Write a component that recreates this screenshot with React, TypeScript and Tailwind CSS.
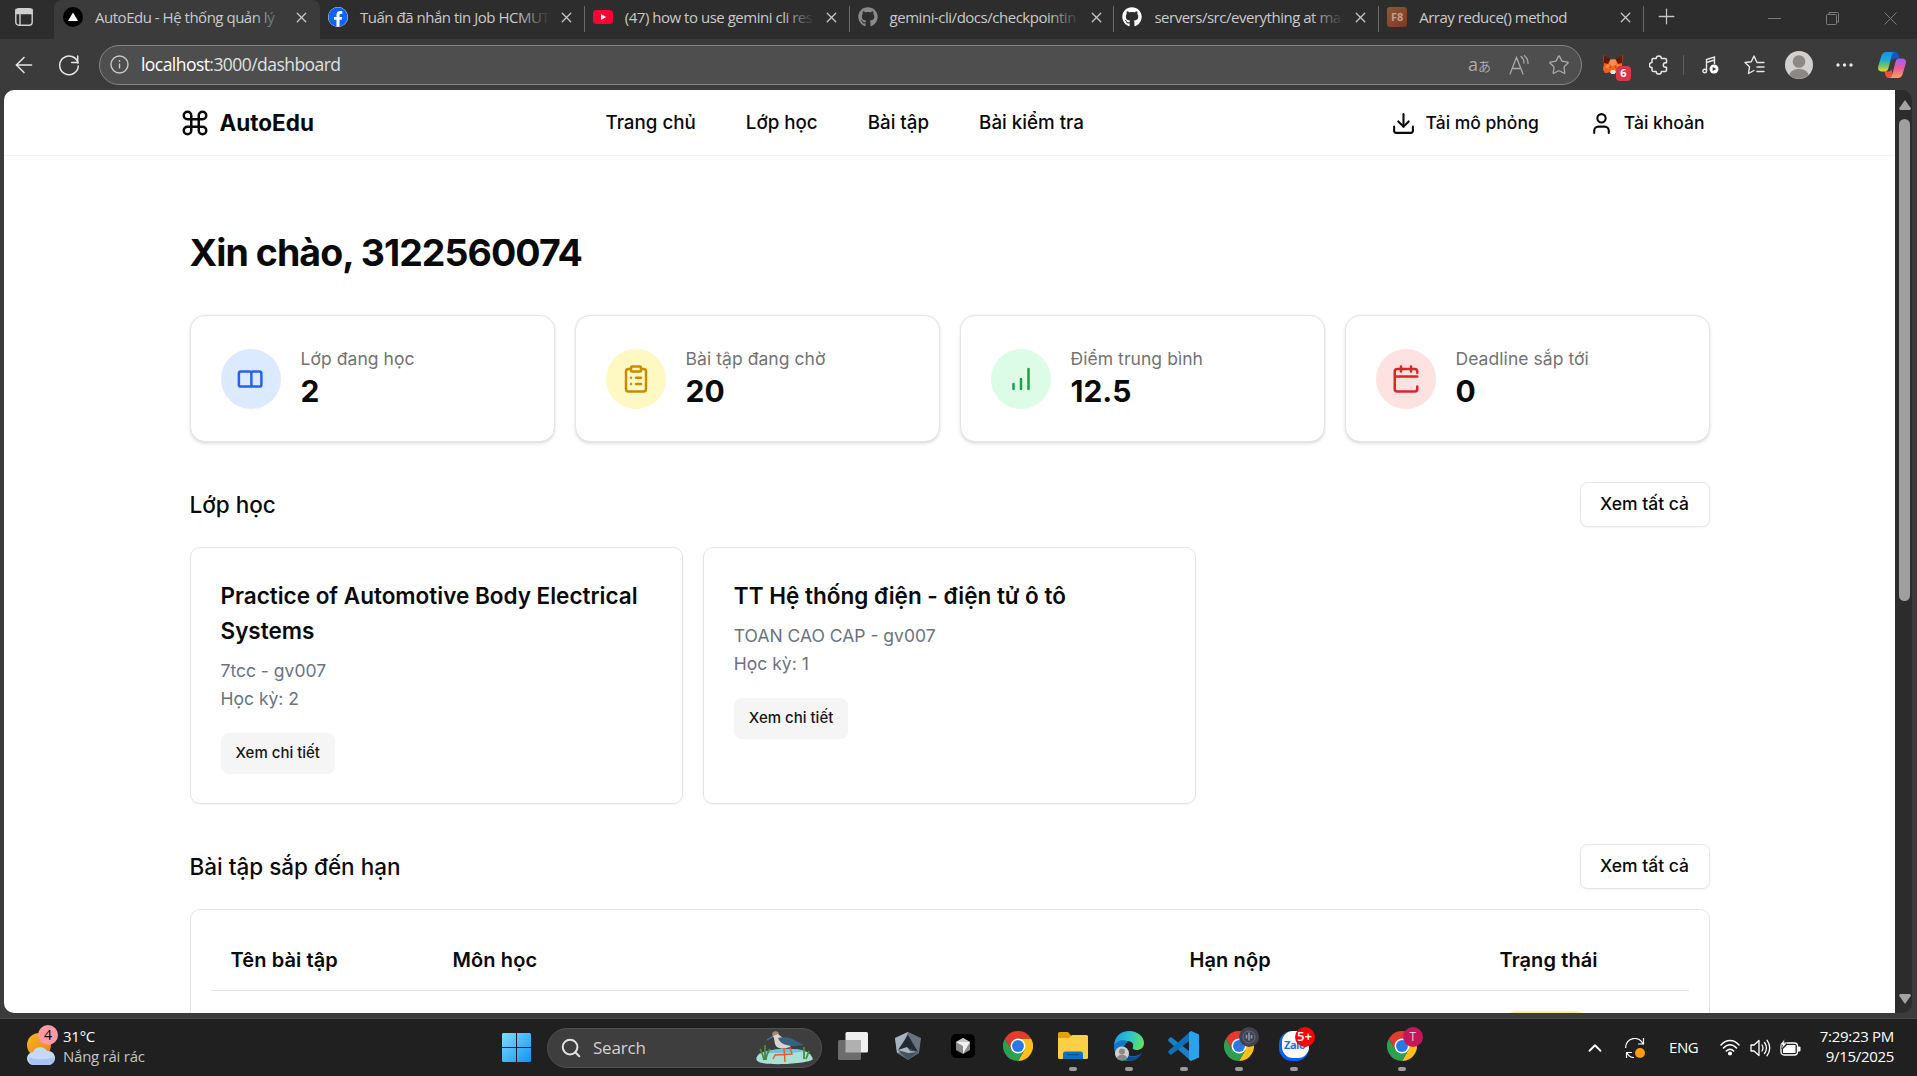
import type { ReactNode } from "react";
import { Command, Download, User, ClipboardList, X, Plus, Star, Search, ArrowLeft, ChevronUp } from "lucide-react";
import { FaFacebook, FaGithub } from "react-icons/fa";

/* ---------- browser chrome ---------- */

function Tab({ icon, title, active, last, gradient }: { icon: ReactNode; title: string; active?: boolean; last?: boolean; gradient: string }) {
  return (
    <div className={`relative flex h-[39px] shrink-0 items-center pb-[5px] ${active ? "w-[266px] rounded-t-lg bg-[#3b3b3b] pl-[9px]" : "w-[264.8px] pl-[8px]"}`}>
      <span className="flex h-5 w-5 shrink-0 items-center justify-center">{icon}</span>
      <span className="relative ml-3 w-[187px] whitespace-nowrap text-[15px] leading-5 tracking-[-0.48px] text-[#c9c9c9]">
        {title}
        {!last && <span className={`absolute -right-[3px] top-0 h-full w-8 bg-linear-to-r from-transparent ${gradient}`} />}
      </span>
      <X className="ml-[11px] h-[17px] w-[17px] shrink-0 text-[#c8c8c8]" strokeWidth={1.8} />
      {!active && <span className="absolute right-0 top-[6px] h-[26px] w-px bg-[#6b6b6b]" />}
    </div>
  );
}

function TabStrip() {
  const g = "to-[#2d2d2d]";
  return (
    <div className="flex h-[39px] bg-[#2d2d2d]">
      <div className="flex w-[54px] shrink-0 items-center rounded-br-lg pb-[5px] pl-[15px]">
        <svg width="18" height="18" viewBox="0 0 18 18" fill="none" stroke="#cfcfcf" strokeWidth="1.4">
          <rect x="0.8" y="0.8" width="16.4" height="16.4" rx="3" />
          <path d="M1 1.5h16v4H1z" fill="#cfcfcf" />
          <path d="M5 5v12" />
        </svg>
      </div>
      <Tab active gradient="to-[#3b3b3b]" title="AutoEdu - Hệ thống quản lý" icon={
        <svg width="20" height="20" viewBox="0 0 20 20"><circle cx="10" cy="10" r="10" fill="#000" /><path d="M10 5.5l5 8.500H5z" fill="#fff" /></svg>} />
      <Tab gradient={g} title="Tuấn đã nhắn tin Job HCMUT" icon={<FaFacebook className="h-5 w-5 rounded-full bg-white text-[#0866ff]" />} />
      <Tab gradient={g} title="(47) how to use gemini cli res" icon={
        <svg width="20" height="14" viewBox="0 0 20 14"><rect width="20" height="14" rx="3.500" fill="#ff0033" /><path d="M8 4l5 3-5 3z" fill="#fff" /></svg>} />
      <Tab gradient={g} title="gemini-cli/docs/checkpointin" icon={<FaGithub className="h-5 w-5 text-[#8a8a8a]" />} />
      <Tab gradient={g} title="servers/src/everything at mai" icon={<FaGithub className="h-5 w-5 text-white" />} />
      <Tab last gradient={g} title="Array reduce() method" icon={
        <span className="flex h-5 w-5 items-center justify-center rounded-[3px] bg-linear-to-br from-[#8d5a38] to-[#7f3622] text-[11px] font-bold text-[#c3a08c]">F8</span>} />
      <div className="flex w-[46px] items-center pb-[6px] pl-[10px]"><Plus className="h-[25px] w-[25px] text-[#c4c4c4]" strokeWidth={1.2} /></div>
      <div className="ml-auto flex items-center gap-[45px] pb-[3px] pr-5 text-[#7c7c7c]">
        <svg width="13" height="13" stroke="currentColor"><path d="M0 6.500h13" /></svg>
        <svg width="13" height="13" fill="none" stroke="currentColor"><rect x="0.5" y="2.5" width="10" height="10" rx="1" /><path d="M3 2.500V.5h8.500a1 1 0 0 1 1 1V10h-2" /></svg>
        <svg width="13" height="13" stroke="currentColor"><path d="M.5.5l12 12M12.500.5l-12 12" /></svg>
      </div>
    </div>
  );
}

function Fox() {
  return (
    <svg width="20" height="19" viewBox="0 0 20 19">
      <path d="M0 0l7.500 4.500h5L20 0l-1 9 1 5-2 4-5-1-1.500 2h-3L7 17l-5 1-2-4 1-5z" fill="#f5671f" />
      <path d="M.5 0l7 4L5 9 1 8zM19.500 0l-7 4L15 9l4-1z" fill="#661800" />
      <path d="M5 9l3 3-6 1zM15 9l-3 3 6 1zM7.500 4.500h5L14 9l-4 2-4-2z" fill="#ff8c4a" />
      <path d="M0 14l6-.5 1 3.500-5 1z" fill="#ff5c16" />
      <path d="M7 17l1.500-2h3L13 17l-1.500 2h-3z" fill="#e8e5e3" />
      <path d="M6 11.500l2 .3-.5 1zM14 11.500l-2 .3.5 1z" fill="#2b1c16" />
    </svg>
  );
}

function Copilot() {
  return (
    <svg width="28" height="26" viewBox="0 0 28 26">
      <defs>
        <linearGradient id="cpA" x1="0" y1="0" x2="0" y2="1"><stop offset="0" stopColor="#168ff0" /><stop offset=".4" stopColor="#22a6d8" /><stop offset=".7" stopColor="#6cc665" /><stop offset="1" stopColor="#f4d329" /></linearGradient>
        <linearGradient id="cpB" x1="0" y1="0" x2="0" y2="1"><stop offset="0" stopColor="#a45cf0" /><stop offset=".5" stopColor="#ec5a9c" /><stop offset="1" stopColor="#ffa05a" /></linearGradient>
      </defs>
      <path d="M13 0h4c2 0 3 1 3.600 3l.9 3.500H17c-2 0-3 1-3.500 2.500z" fill="#1458c8" />
      <path d="M6.500 19.500H11c1 0 2-1 2.500-2.500L15 26h-4c-2 0-3-1-3.600-3z" fill="#f2503c" />
      <path d="M8 0h9c-1.500 0-2.500 1-3 2.500L10.500 16c-.6 2.300-1.500 3.500-3.500 3.500H4c-3.200 0-4.500-2-3.800-5L3.500 3.500C4.300 1.200 5.700 0 8 0z" fill="url(#cpA)" />
      <path d="M20 26h-9c1.500 0 2.500-1 3-2.500L17.500 10c.6-2.300 1.500-3.500 3.500-3.500h3c3.200 0 4.500 2 3.800 5l-3.300 11c-.8 2.300-2.200 3.500-4.500 3.500z" fill="url(#cpB)" />
    </svg>
  );
}

function AddressBar() {
  return (
    <div className="flex h-[51px] items-center bg-[#3b3b3b] text-[#e6e6e6]">
      <div className="flex w-[99px] items-center gap-[21px] pl-[11px]">
        <ArrowLeft className="h-[26px] w-[26px]" strokeWidth={1.4} />
        <svg width="22" height="22" viewBox="0 0 22 22" fill="none" stroke="currentColor" strokeWidth="1.500" strokeLinecap="round"><path d="M20 9A9.300 9.300 0 1 0 20.300 12" /><path d="M19.700 2v6.500h-6" /></svg>
      </div>
      <div className="flex h-10 w-[1483px] items-center rounded-full border border-[#858585] bg-[#4e4e4e] pl-[10px] pr-[11px]">
        <svg width="19" height="19" viewBox="0 0 19 19" fill="none" stroke="#c8c8c8" strokeWidth="1.400"><circle cx="9.500" cy="9.500" r="8.500" /><path d="M9.500 8.500v5M9.500 5v1.800" /></svg>
        <span className="ml-[12px] text-[17.500px] tracking-[-0.55px] text-[#e0e0e0]"><span className="text-white">localhost</span>:3000/dashboard</span>
        <div className="ml-auto flex items-center gap-[19px] text-[#ababab]">
          <span className="flex w-[22px] items-baseline text-[18px] leading-5">a<span className="font-['Noto_Sans_CJK_JP',sans-serif] text-[13px]">あ</span></span>
          <svg width="20" height="20" viewBox="0 0 20 20" fill="none" stroke="currentColor" strokeWidth="1.300" strokeLinecap="round"><path d="M1 19L7.500 2.500 14 19M3.300 13.500h8.400M12 1.500c2 1.500 3 4 3 6.500M15.500.7c2.500 2 3.500 4.800 3.500 7.800" /></svg>
          <Star className="h-[22px] w-[22px]" strokeWidth={1.4} />
        </div>
      </div>
      <div className="flex flex-1 items-center pl-[21px]">
        <span className="relative flex w-5">
          <Fox />
          <span className="absolute left-[13px] top-[11px] flex h-[15px] w-[15px] items-center justify-center rounded-[4px] bg-[#dc3545] text-[11px] font-bold text-white">6</span>
        </span>
        <svg className="ml-[26px]" width="19" height="20" viewBox="0 0 19 20" fill="none" stroke="currentColor" strokeWidth="1.500" strokeLinejoin="round">
          <path d="M4 3.500h3.200a2.600 2.600 0 0 1 5.200 0H16a1.500 1.500 0 0 1 1.500 1.500v2.700h-.9a2.300 2.300 0 0 0 0 4.600h.9V15a1.500 1.500 0 0 1-1.500 1.500h-3.600a2.600 2.600 0 0 1-5.200 0H4.500A1.500 1.500 0 0 1 3 15v-2.400a2.600 2.600 0 0 1 0-5.200V5a1.500 1.500 0 0 1 1-1.500z" />
        </svg>
        <span className="ml-[15px] h-5 w-px bg-[#5e5e5e]" />
        <svg className="ml-[18px]" width="17" height="18" viewBox="0 0 17 18" fill="none" stroke="currentColor" strokeWidth="1.400"><path d="M4.500 15V3.500L12.500 1v7M4.500 6.500l8-2.500" /><circle cx="2.700" cy="15" r="1.800" /><circle cx="12" cy="13" r="4.500" fill="#fff" stroke="none" /><path d="M10.700 11l3.500 2-3.500 2z" fill="#333" stroke="none" /></svg>
        <svg className="ml-[25px]" width="21" height="20" viewBox="0 0 21 20" fill="none" stroke="currentColor" strokeWidth="1.400" strokeLinecap="round" strokeLinejoin="round"><path d="M12.500 6.500L10 1 7.300 6.700 1 7.500l4.500 4.300L4.500 18.500l5.500-3M13 7.500h7M13 12h7M13 16.500h7" /></svg>
        <svg className="ml-[20px]" width="28" height="28" viewBox="0 0 28 28"><circle cx="14" cy="14" r="14" fill="#d2d0ce" /><circle cx="14" cy="10.500" r="6.300" fill="#8b8886" /><path d="M4.500 24c1-8 18-8 19 0A14 14 0 0 1 4.500 24z" fill="#8b8886" /></svg>
        <svg className="ml-[23px]" width="17" height="4" fill="#e6e6e6"><circle cx="2" cy="2" r="1.700" /><circle cx="8.500" cy="2" r="1.700" /><circle cx="15" cy="2" r="1.700" /></svg>
        <span className="ml-[25px]"><Copilot /></span>
      </div>
    </div>
  );
}

/* ---------- dashboard ---------- */

function SiteHeader() {
  return (
    <header className="border-b border-[#f3f3f3]">
      <div className="mx-auto flex h-[65px] w-[1600px] items-center px-[30px] text-[#0a0a0a]">
        <div className="flex w-[426px] items-center gap-[10px]">
          <Command className="h-[30px] w-[30px]" strokeWidth={2} />
          <span className="text-[22.500px] font-bold">AutoEdu</span>
        </div>
        <nav className="flex gap-[50px] pt-[2px] text-[18.750px] font-medium">
          <span>Trang chủ</span><span>Lớp học</span><span>Bài tập</span><span>Bài kiểm tra</span>
        </nav>
        <div className="ml-auto flex items-center pr-[15px] pt-px text-[17.500px] font-medium">
          <Download className="h-[25px] w-[25px]" strokeWidth={2} />
          <span className="ml-[10px] pt-px">Tải mô phỏng</span>
          <User className="ml-[50px] h-[25px] w-[25px]" strokeWidth={2} />
          <span className="ml-[10px] pt-px">Tài khoản</span>
        </div>
      </div>
    </header>
  );
}

function StatCard({ icon, tint, label, value }: { icon: ReactNode; tint: string; label: string; value: string }) {
  return (
    <div className="flex items-center gap-5 rounded-[15px] border border-[#e5e5e5] bg-white p-[30px] shadow-[0_1.25px_3.75px_rgba(0,0,0,0.1),0_1.25px_2.5px_-1.25px_rgba(0,0,0,0.1)]">
      <span className={`mt-px flex h-[60px] w-[60px] items-center justify-center rounded-full ${tint}`}>{icon}</span>
      <div>
        <p className="text-[17.500px] leading-[25px] tracking-[0.06px] text-[#737373]">{label}</p>
        <p className="text-[30px] font-bold leading-10">{value}</p>
      </div>
    </div>
  );
}

const stroke = { width: 30, height: 30, viewBox: "0 0 24 24", fill: "none", stroke: "currentColor", strokeWidth: 2, strokeLinecap: "round", strokeLinejoin: "round" } as const;

function SectionTitle({ title }: { title: string }) {
  return (
    <div className="mt-10 flex h-[45px] items-center justify-between">
      <h2 className="text-[22.500px] font-medium leading-[35px]">{title}</h2>
      <button className="h-[45px] w-[130px] whitespace-nowrap rounded-[7.500px] border border-[#e5e5e5] bg-white pt-px text-[17.500px] font-medium shadow-[0_1px_2px_rgba(0,0,0,0.05)]">Xem tất cả</button>
    </div>
  );
}

function ClassCard({ name, code, term }: { name: string; code: string; term: string }) {
  return (
    <div className="rounded-[10px] border border-[#e5e5e5] bg-white px-[30px] pb-[29px] pt-[30px] shadow-[0_1px_2px_rgba(0,0,0,0.05)]">
      <h3 className="text-[22.500px] font-semibold leading-[35px]">{name}</h3>
      <p className="mt-[9px] text-[17.500px] leading-7 text-[#6b7280]">{code}</p>
      <p className="text-[17.500px] leading-7 text-[#6b7280]">{term}</p>
      <button className="mt-5 h-[41px] rounded-[7.500px] bg-[#f5f5f5] px-[15px] text-[15px] font-medium text-[#171717]">Xem chi tiết</button>
    </div>
  );
}

function Dashboard() {
  return (
    <main className="mx-auto w-[1520px] pt-[72px] text-[#0a0a0a]">
      <h1 className="mb-[36.500px] text-[37.500px] font-bold leading-[50px] tracking-[-0.025em]">Xin chào, 3122560074</h1>
      <div className="grid grid-cols-4 gap-5">
        <StatCard label="Lớp đang học" value="2" tint="bg-[#dbeafe] text-[#2563eb]" icon={
          <svg {...stroke}><path d="M12 7.500A1.500 1.500 0 0 0 10.500 6h-7A1.500 1.500 0 0 0 2 7.500v9A1.500 1.500 0 0 0 3.500 18h7a1.500 1.500 0 0 0 1.500-1.500zM12 7.500A1.500 1.500 0 0 1 13.500 6h5A1.500 1.500 0 0 1 20 7.500v9a1.500 1.500 0 0 1-1.500 1.500h-5a1.500 1.500 0 0 1-1.500-1.500" transform="translate(.3 0)" /></svg>} />
        <StatCard label="Bài tập đang chờ" value="20" tint="bg-[#fef9c3] text-[#ca8a04]" icon={<ClipboardList className="h-[30px] w-[30px]" />} />
        <StatCard label="Điểm trung bình" value="12.5" tint="bg-[#dcfce7] text-[#16a34a]" icon={
          <svg {...stroke}><path d="M6 20v-4M12 20v-8M18 20V4" /></svg>} />
        <StatCard label="Deadline sắp tới" value="0" tint="bg-[#fee2e2] text-[#dc2626]" icon={
          <svg {...stroke}><path d="M8 2v4M16 2v4M3 10h18M21 7V6a2 2 0 0 0-2-2H5a2 2 0 0 0-2 2v14a2 2 0 0 0 2 2h14a2 2 0 0 0 2-2v-2" /></svg>} />
      </div>
      <SectionTitle title="Lớp học" />
      <div className="mt-5 grid grid-cols-3 gap-5">
        <ClassCard name="Practice of Automotive Body Electrical Systems" code="7tcc - gv007" term="Học kỳ: 2" />
        <ClassCard name="TT Hệ thống điện - điện tử ô tô" code="TOAN CAO CAP - gv007" term="Học kỳ: 1" />
      </div>
      <SectionTitle title="Bài tập sắp đến hạn" />
      <div className="mt-5 h-[300px] rounded-[10px] border border-[#e5e5e5] p-5 pt-[21px]">
        <div className="grid h-[60px] grid-cols-[222px_737px_310px_1fr] items-center border-b border-[#e5e5e5] pl-5 text-[20px] font-semibold tracking-[0.1px]">
          <span>Tên bài tập</span><span>Môn học</span><span>Hạn nộp</span><span>Trạng thái</span>
        </div>
        <div className="grid grid-cols-[1269px_1fr] pl-5 pt-5"><span /><span className="h-[35px] w-[92px] rounded-full bg-[#fef08a]" /></div>
      </div>
    </main>
  );
}

/* ---------- taskbar ---------- */

function Chrome() {
  return (
    <svg width="30" height="30" viewBox="0 0 48 48">
      <path d="M24 12h20.800A24 24 0 0 1 24 48l10.400-18z" fill="#fbc116" />
      <path d="M3.200 12A24 24 0 0 0 24 48l10.400-18H13.600z" fill="#2f9e4f" />
      <path d="M3.200 12A24 24 0 0 1 44.800 12H24L13.600 30z" fill="#e33b2e" />
      <circle cx="24" cy="24" r="12" fill="#fff" /><circle cx="24" cy="24" r="9.500" fill="#2a78e8" />
    </svg>
  );
}

function TaskItem({ children, running, badge }: { children: ReactNode; running?: boolean; badge?: ReactNode }) {
  return (
    <div className="relative flex h-full w-[55.200px] shrink-0 items-center justify-center pb-1">
      {children}
      {badge}
      {running && <span className="absolute bottom-[5px] h-1 w-2 rounded-full bg-[#9b9b9b]" />}
    </div>
  );
}

function Bird() {
  return (
    <svg width="58" height="34" viewBox="0 0 58 34">
      <path d="M3 23c8-5 36-7 48-2 4 2 5 5 6 7-4 5-46 7-54 3-4-2-3-5 0-8z" fill="#a6e3d6" />
      <path d="M3 23c8-5 36-7 46-3-10 3-34 1-46 3z" fill="#6cc3dc" />
      <path d="M19 4l-8 5" stroke="#3f7fa0" strokeWidth="1.300" />
      <circle cx="19.500" cy="3.500" r="3.200" fill="#a78871" />
      <path d="M17 5c2 3 1 9 4 11 5 3 12 1 14-1L28 8l-6-5z" fill="#d9d4cd" />
      <path d="M22 7c6-2 14 0 18 3l8 4-10 1c-7 0-14-2-16-8z" fill="#39617f" />
      <path d="M28 17l1 14M34 16l2 7-17 1-2 4" stroke="#f0562f" strokeWidth="1.400" fill="none" />
      <path d="M8 29c-1-5-2-8-4-11M9 29V14M10 29c0-5 2-8 4-11M48 28V16M50 28l3-8" stroke="#4d8a3d" strokeWidth="1.800" fill="none" />
    </svg>
  );
}

function Taskbar() {
  const badge = "absolute left-[28px] top-[8px] flex h-5 w-5 items-center justify-center rounded-full text-[12px]";
  return (
    <footer className="flex h-[58px] items-center border-t border-[#484848] bg-[#202020] text-white">
      <div className="flex w-[502px] items-center pl-[26px]">
        <div className="relative h-[38px] w-[37px]">
          <svg className="mt-[1px]" width="29" height="36" viewBox="0 0 29 36"><defs><linearGradient id="sun" x1="0" y1="0" x2="1" y2="1"><stop offset="0" stopColor="#f5b62a" /><stop offset="1" stopColor="#f0820f" /></linearGradient></defs><circle cx="13" cy="15" r="12" fill="url(#sun)" /><path d="M8 35a6.500 6.500 0 0 1-1-13 8 8 0 0 1 14-1 7 7 0 0 1 2 14z" fill="#c5daf8" /><path d="M8 35a6.500 6.500 0 0 1-5-8c5 3 19 3 25 0a6 6 0 0 1-5 8z" fill="#a9c4f2" /></svg>
          <span className="absolute left-[12px] top-[-4px] flex h-5 w-5 items-center justify-center rounded-full bg-[#ff99a4] text-[14px] text-black">4</span>
        </div>
        <div className="-mt-[3px] text-[15px] leading-5 tracking-[-0.25px]"><p>31°C</p><p className="text-[#c4c4c4]">Nắng rải rác</p></div>
      </div>
      <svg width="29" height="29" viewBox="0 0 29 29">
        <defs><linearGradient id="win" x1="0" y1="0" x2="1" y2="1"><stop offset="0" stopColor="#7fdcfb" /><stop offset="1" stopColor="#0f94f5" /></linearGradient></defs>
        <path d="M1 0h13v14H0V1zM15 0h13l1 1v13H15zM0 15h14v14H1l-1-1zM15 15h14v13l-1 1H15z" fill="url(#win)" />
      </svg>
      <div className="ml-4 flex h-10 w-[275px] items-center rounded-full border border-[#505050] bg-[#3e3e3e] pl-[12px] pr-[7px]">
        <Search className="h-[22px] w-[22px] text-[#e2e2e2]" strokeWidth={2.200} />
        <span className="ml-[11px] text-[17px] tracking-[-0.2px] text-[#d2d2d2]">Search</span>
        <span className="ml-auto"><Bird /></span>
      </div>
      <div className="ml-[3px] flex h-full">
        <TaskItem><svg width="30" height="28" viewBox="0 0 30 28"><rect x="7.500" y="0" width="22.500" height="20.500" rx="1.500" fill="#f0f0f0" /><rect x="0" y="8" width="23" height="20" rx="1.500" fill="#6c6c6c" /><path d="M7.500 8H23v12.500H7.500z" fill="#b0b0b0" /></svg></TaskItem>
        <TaskItem><svg width="26" height="28" viewBox="0 0 26 28"><path d="M13 0l13 6-2 15-11 7-11-7L0 6z" fill="#68737f" /><path d="M13 0L0 6l2 15 3-1z" fill="#a7b4c0" /><path d="M13 3l10 17-11-4-9 2z" fill="#222a33" /><path d="M3 18l9-2 11 4-10 8z" fill="#465260" /><path d="M3 18l9-3 3 4 8 1-10 1z" fill="#aab8c4" /></svg></TaskItem>
        <TaskItem><svg width="24" height="24" viewBox="0 0 24 24"><rect width="24" height="24" rx="5" fill="#000" /><path d="M12 4l7 4v8l-7 4-7-4V8z" fill="#8a8a8a" /><path d="M5 8h14l-7 12v-8z" fill="#f1f1f1" /><path d="M12 4l7 4H5z" fill="#c7c7c7" /></svg></TaskItem>
        <TaskItem><Chrome /></TaskItem>
        <TaskItem running>
          <svg width="30" height="27" viewBox="0 0 30 27"><path d="M0 1.500A1.500 1.500 0 0 1 1.500 0H10l3 3.500V8H0z" fill="#e0a012" /><path d="M0 6h11l3-3h14.500A1.500 1.500 0 0 1 30 4.500v21a1.500 1.500 0 0 1-1.500 1.500h-27A1.500 1.500 0 0 1 0 25.500z" fill="#fdce46" /><path d="M5 27v-5a2.500 2.500 0 0 1 2.500-2.500h15A2.500 2.500 0 0 1 25 22v5z" fill="#1072bd" /><path d="M9 22.700h12" stroke="#074b86" /></svg>
        </TaskItem>
        <TaskItem running>
          <svg width="30" height="30" viewBox="0 0 30 30">
            <defs><linearGradient id="edge" x1="0" y1=".3" x2="1" y2=".5"><stop offset="0" stopColor="#1b9de2" /><stop offset=".5" stopColor="#2bc3d2" /><stop offset="1" stopColor="#65e15c" /></linearGradient></defs>
            <path d="M0 14C1 5 7 0 15 0c9 0 15 6 15 12 0 5-4 7-7 7s-5-1-4-3c1-4-2-6-6-6-6 0-11 3-13 4z" fill="url(#edge)" />
            <path d="M0 14c3-5 11-6 14-3-6 3-5 12 3 14 4 1 8-1 11-3-3 5-8 8-13 8C6 30-1 23 0 14z" fill="#1277c9" />
            <path d="M11 16c-1 5 2 10 8 10 3 0 7-2 9-4-3 5-8 8-13 8-6-1-8-9-4-14z" fill="#134b91" />
            <circle cx="8" cy="22.500" r="7" fill="#d2d0ce" /><circle cx="8" cy="20.500" r="3" fill="#8b8886" /><path d="M3 27.500c0-5 10-5 10 0a7 7 0 0 1-10 0z" fill="#8b8886" />
          </svg>
        </TaskItem>
        <TaskItem running>
          <svg width="31" height="30" viewBox="0 0 31 30"><path d="M1 7.500L3 6l20 15.500V30L.8 10.500c-1-1-.8-2 .2-3z" fill="#1581c8" /><path d="M1 22.500L3 24 23 8.500V0L.8 19.500c-1 1-.8 2 .2 3z" fill="#0f70b5" /><path d="M23 0l8 3.500v23L23 30l-2-1.500V1.500z" fill="#28a3ef" /></svg>
        </TaskItem>
        <TaskItem running badge={<span className={`${badge} bg-[#40424f]`}><svg width="14" height="14" viewBox="0 0 14 14"><circle cx="7" cy="7" r="6" fill="none" stroke="#686e7c" /><path d="M7 2.500v8M4.500 5v3.500M9.500 5v3.500" stroke="#8d97a8" strokeWidth="1.600" fill="none" /></svg></span>}><Chrome /></TaskItem>
        <TaskItem running badge={<span className={`${badge} bg-[#f70505] text-[13px] font-semibold`}>5+</span>}>
          <span className="relative flex h-[30px] w-[30px] items-center rounded-[13px] bg-[#0a62f3] pl-[5px]"><span className="absolute left-[3px] top-0 h-[27px] w-[27px] rounded-[11px] bg-white" /><span className="relative text-[11px] font-bold tracking-[-0.5px] text-[#1a6df0]">Zalo</span></span>
        </TaskItem>
        <span className="w-[53px]" />
        <TaskItem running badge={<span className={`${badge} bg-[#c2185b] text-[#f1c6d7]`}>T</span>}><Chrome /></TaskItem>
      </div>
      <div className="ml-auto flex items-center pr-[23px]">
        <ChevronUp className="h-[22px] w-[22px]" strokeWidth={2} />
        <svg className="ml-[19px]" width="20" height="20" viewBox="0 0 20 20" fill="none" stroke="#fff" strokeWidth="1.200"><path d="M.7 10a9 9 0 0 1 17.500-3.500M18.500 0v6H13M1.500 20v-5.500H7M2 15c1.500 3 4 4.500 7 4.500" /><circle cx="15" cy="15" r="5" fill="#ff9a0a" stroke="none" /></svg>
        <span className="ml-[24px] w-[29px] text-[15px] tracking-[-0.4px]">ENG</span>
        <svg className="ml-[22px]" width="20" height="17" viewBox="0 0 20 17" fill="none" stroke="#fff" strokeWidth="1.500" strokeLinecap="round"><path d="M1 6c5-6 13-6 18 0M3.500 9c4-4.500 9-4.500 13 0M6.300 12c2.500-2.500 5-2.500 7.400 0" /><circle cx="10" cy="14.500" r="1.300" fill="#fff" /></svg>
        <svg className="ml-[10px]" width="21" height="18" viewBox="0 0 21 18" fill="none" stroke="#fff" strokeWidth="1.300" strokeLinecap="round" strokeLinejoin="round"><path d="M1 6h3l5-4.500v15L4 12H1zM12 6c1.300 2 1.300 4 0 6M14.500 3.500c2.500 3.500 2.500 7.500 0 11M17 1.200c3.500 5 3.500 10.600 0 15.600" /></svg>
        <svg className="ml-[9px]" width="21" height="17" viewBox="0 0 21 17"><rect x="1" y="4" width="16.500" height="12" rx="3" fill="none" stroke="#fff" strokeWidth="1.300" /><path d="M3 14V10l4-4h8.500v8z" fill="#fff" /><path d="M18 7.500h1.500a1 1 0 0 1 1 1v3a1 1 0 0 1-1 1H18z" fill="#fff" /><path d="M4.500 0L0 6h2.500L1.500 10 7 4H4z" fill="#fff" stroke="#202020" strokeWidth=".5" /></svg>
        <div className="-mt-[3px] ml-[13px] w-[80px] whitespace-nowrap text-right text-[15px] leading-5 tracking-[-0.3px]"><p>7:29:23 PM</p><p>9/15/2025</p></div>
      </div>
    </footer>
  );
}

export default function App() {
  return (
    <div className="flex h-[1076px] w-[1917px] flex-col overflow-hidden bg-[#3b3b3b] font-['Open_Sans','Noto_Sans',sans-serif]">
      <TabStrip />
      <AddressBar />
      <div className="ml-1 mr-[5px] flex h-[923px] overflow-hidden rounded-[10px]">
        <div className="h-full w-[1891px] overflow-hidden bg-white font-[Inter,sans-serif]">
          <SiteHeader />
          <Dashboard />
        </div>
        <div className="flex h-full flex-1 flex-col items-center bg-[#2c2c2c] pb-[9px] pl-[2px] pt-[10px]">
          <svg width="12" height="10" fill="#a3a3a3"><path d="M6 0l6 8.500-1 1.500H1L0 8.500z" /></svg>
          <span className="mt-[9px] h-[482px] w-[11px] rounded-full bg-[#9f9f9f]" />
          <svg className="mt-auto" width="12" height="10" fill="#a3a3a3"><path d="M6 10l6-8.500L11 0H1L0 1.500z" /></svg>
        </div>
      </div>
      <div className="mt-auto"><Taskbar /></div>
    </div>
  );
}
